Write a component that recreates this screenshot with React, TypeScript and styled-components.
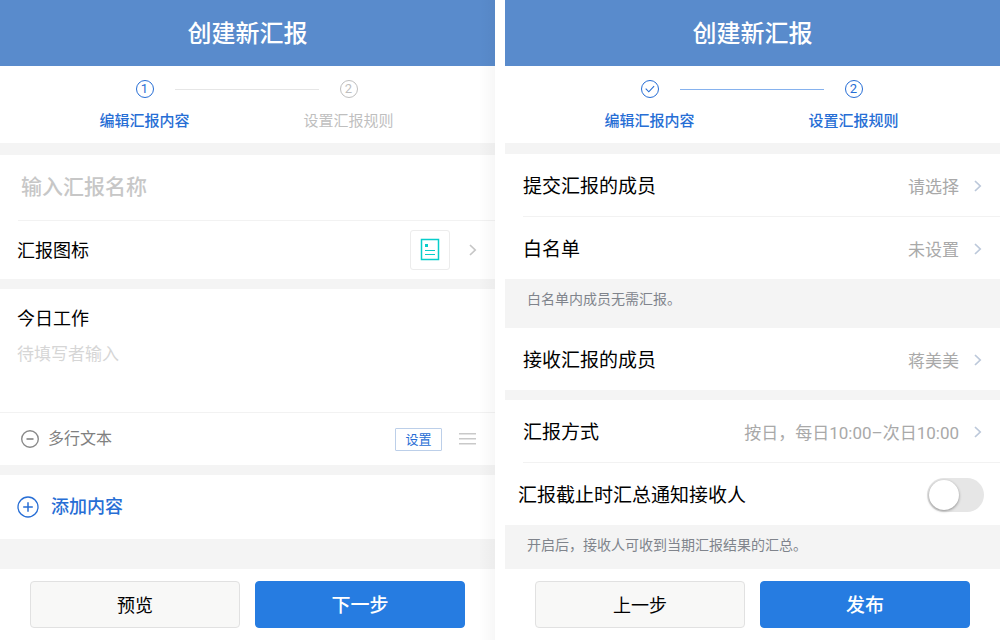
import React from "react";
import styled, { createGlobalStyle } from "styled-components";

const GlobalStyle = createGlobalStyle`
  *, *::before, *::after { box-sizing: border-box; }
  body {
    margin: 0;
    background: #fff;
    color: #000;
    font-family: Roboto, "Noto Sans CJK SC", sans-serif;
  }
  button, input, textarea { font: inherit; color: inherit; margin: 0; }
  h1, h2, p, ol { margin: 0; padding: 0; font-weight: 400; }
`;

const blue = "#276ed5";

const Page = styled.main`
  display: grid;
  grid-template-columns: 1fr 1fr;
  gap: 10px;
  min-height: 100vh;
`;

const Panel = styled.section<{ $edge?: boolean }>`
  position: relative;
  display: flex;
  flex-direction: column;
  min-width: 0;
  background: #fff;

  &::after {
    content: ${(p) => (p.$edge ? '""' : "none")};
    position: absolute;
    inset: 0 0 0 auto;
    width: 16px;
    background: linear-gradient(to right, rgba(0, 0, 0, 0), rgba(0, 0, 0, 0.03));
    pointer-events: none;
  }
`;

const Header = styled.header`
  display: flex;
  align-items: center;
  justify-content: center;
  height: 66px;
  padding-top: 2px;
  background: #598bcc;
`;

const Title = styled.h1`
  color: #fff;
  font-size: 24px;
  line-height: 36px;
  font-weight: 500;
`;

const Steps = styled.ol`
  display: flex;
  justify-content: center;
  height: 77px;
  padding: 14px 2px 0 0;
  list-style: none;
`;

const Step = styled.li<{ $on: boolean }>`
  display: flex;
  flex-direction: column;
  align-items: center;
  gap: 12px;
  width: 90px;
  color: ${(p) => (p.$on ? blue : "#bfbfbf")};
  font-size: 15px;
  line-height: 22px;
  font-weight: ${(p) => (p.$on ? 500 : 400)};
  white-space: nowrap;
`;

const StepMark = styled.span`
  display: flex;
  align-items: center;
  justify-content: center;
  width: 18px;
  height: 18px;
  border: 1px solid currentColor;
  border-radius: 50%;
  font-size: 13px;
  line-height: 16px;
  font-weight: 400;
`;

const StepLine = styled.li<{ $on: boolean }>`
  width: 144px;
  height: 1px;
  margin: 9px -15px 0;
  background: ${(p) => (p.$on ? "#86b2ee" : "#e6e6e6")};
`;

const Band = styled.div<{ $size: number; $grow?: boolean }>`
  flex: ${(p) => (p.$grow ? "1 0 auto" : "none")};
  min-height: ${(p) => p.$size}px;
  background: #f4f4f4;
`;

const Note = styled.p<{ $grow?: boolean }>`
  flex: ${(p) => (p.$grow ? "1 0 auto" : "none")};
  min-height: ${(p) => (p.$grow ? 44 : 49)}px;
  padding: 9px 22px;
  background: #f4f4f4;
  color: #80848c;
  font-size: 14px;
  line-height: 22px;
`;

const Divider = styled.hr<{ $inset?: boolean }>`
  width: auto;
  height: 1px;
  margin: 0 0 0 ${(p) => (p.$inset ? 18 : 0)}px;
  border: 0;
  background: #f2f2f2;
`;

const NameInput = styled.input`
  width: 100%;
  height: 65px;
  padding: 0 21px 2px;
  border: 0;
  outline: 0;
  background: none;
  font-size: 21px;
  font-weight: 500;

  &::placeholder { color: #c7c7c7; opacity: 1; }
`;

const RowButton = styled.button<{ $height: number }>`
  display: flex;
  align-items: center;
  width: 100%;
  height: ${(p) => p.$height}px;
  padding: 0 18px 0 17px;
  border: 0;
  background: none;
  text-align: left;
  cursor: pointer;
`;

const ChoiceButton = styled(RowButton)`
  padding: 2px 18px 0;
`;

const RowLabel = styled.span<{ $large?: boolean }>`
  flex: 1;
  padding-top: 2px;
  font-size: ${(p) => (p.$large ? 19 : 18)}px;
  line-height: 28px;
  white-space: nowrap;
`;

const RowValue = styled.span`
  padding-top: 2px;
  margin-right: 15px;
  color: #a9a9a9;
  font-size: 17px;
  line-height: 26px;
  white-space: nowrap;
`;

const IconTile = styled.span`
  display: flex;
  align-items: center;
  justify-content: center;
  width: 40px;
  height: 40px;
  margin-right: 19px;
  border: 1px solid #ececec;
  border-radius: 3px;
`;

const Field = styled.div`
  display: flex;
  flex-direction: column;
  height: 123px;
  padding: 16px 17px 0;
`;

const FieldLabel = styled.label`
  font-size: 18px;
  line-height: 28px;
`;

const FieldText = styled.textarea`
  height: 64px;
  margin-top: 8px;
  padding: 0;
  border: 0;
  outline: 0;
  resize: none;
  background: none;
  font-size: 17px;
  line-height: 26px;

  &::placeholder { color: #d6d6d6; opacity: 1; }
`;

const Tools = styled.div`
  display: flex;
  align-items: center;
  height: 52px;
  padding: 0 18px 0 20px;
`;

const IconButton = styled.button`
  display: flex;
  padding: 0;
  border: 0;
  background: none;
  cursor: pointer;
`;

const TypeName = styled.span`
  flex: 1;
  margin-left: 8px;
  color: #808080;
  font-size: 16px;
  line-height: 24px;
`;

const SettingButton = styled.button`
  width: 47px;
  height: 23px;
  margin-right: 17px;
  padding: 0;
  border: 1px solid #bccfe9;
  border-radius: 1px;
  background: #fff;
  color: ${blue};
  font-size: 13px;
  line-height: 21px;
  cursor: pointer;
`;

const AddLabel = styled.span`
  margin-left: 12px;
  color: ${blue};
  font-size: 18px;
  line-height: 28px;
  font-weight: 500;
`;

const SwitchRow = styled.label`
  display: flex;
  align-items: center;
  height: 62px;
  padding: 2px 16px 0 13px;
  cursor: pointer;
`;

const Switch = styled.input`
  appearance: none;
  display: flex;
  align-items: center;
  width: 57px;
  height: 34px;
  margin: 0;
  padding: 2px;
  border-radius: 17px;
  background: #e6e6e6;
  cursor: pointer;

  &::before {
    content: "";
    width: 30px;
    height: 30px;
    border-radius: 50%;
    background: #fff;
    box-shadow: 0 1px 3px rgba(0, 0, 0, 0.4);
  }
  &:checked { background: #267ce1; justify-content: flex-end; }
`;

const Footer = styled.footer`
  display: flex;
  gap: 15px;
  padding: 12px 30px;
`;

const Action = styled.button<{ $primary?: boolean }>`
  flex: 1;
  height: 47px;
  padding: 2px 0 0;
  border: 1px solid ${(p) => (p.$primary ? "#267ce1" : "#e1e1e1")};
  border-radius: 4px;
  background: ${(p) => (p.$primary ? "#267ce1" : "#f8f8f7")};
  color: ${(p) => (p.$primary ? "#fff" : "#000")};
  font-size: ${(p) => (p.$primary ? 19 : 18)}px;
  font-weight: ${(p) => (p.$primary ? 500 : 400)};
  line-height: 28px;
  cursor: pointer;
`;

const Chevron = ({ color = "#bcc8da" }: { color?: string }) => (
  <svg width="8" height="12" viewBox="0 0 8 12" fill="none" stroke={color} strokeWidth="1.7" aria-hidden="true">
    <path d="M1 1l5.2 5L1 11" />
  </svg>
);

const CheckIcon = () => (
  <svg width="12" height="12" viewBox="0 0 12 12" fill="none" stroke="currentColor" strokeWidth="1.1" aria-hidden="true">
    <path d="M1.7 5.6l3.1 3.2 5.3-5.6" />
  </svg>
);

const ReportIcon = () => (
  <svg width="20" height="24" viewBox="0 0 20 24" fill="none" stroke="#07cdcb" aria-hidden="true">
    <rect x="1.5" y="1.5" width="17" height="20" strokeWidth="1.5" />
    <rect x="5" y="6" width="3" height="3" fill="#07cdcb" stroke="none" />
    <path d="M5 12.5h10M5 16.5h10" strokeWidth="1.2" />
  </svg>
);

const MinusIcon = () => (
  <svg width="20" height="20" viewBox="0 0 20 20" fill="none" stroke="#8a8a8a" strokeWidth="1.4" aria-hidden="true">
    <circle cx="10" cy="10" r="8.3" />
    <path d="M6.5 10h7" strokeWidth="1.7" />
  </svg>
);

const PlusIcon = () => (
  <svg width="22" height="22" viewBox="0 0 22 22" fill="none" stroke={blue} strokeWidth="1.3" aria-hidden="true">
    <circle cx="11" cy="11" r="10" />
    <path d="M6.2 11h9.6M11 6.2v9.6" strokeWidth="1.5" />
  </svg>
);

const HandleIcon = () => (
  <svg width="18" height="12" viewBox="0 0 18 12" stroke="#c9c9c9" strokeWidth="1.4" aria-hidden="true">
    <path d="M0 .8h17M0 5.8h17M0 10.8h17" />
  </svg>
);

const Progress = ({ current }: { current: 1 | 2 }) => (
  <Steps>
    <Step $on>
      <StepMark>{current === 2 ? <CheckIcon /> : 1}</StepMark>
      编辑汇报内容
    </Step>
    <StepLine $on={current === 2} aria-hidden="true" />
    <Step $on={current === 2}>
      <StepMark>2</StepMark>
      设置汇报规则
    </Step>
  </Steps>
);

const ChoiceRow = ({ label, value }: { label: string; value: string }) => (
  <ChoiceButton type="button" $height={62}>
    <RowLabel $large>{label}</RowLabel>
    <RowValue>{value}</RowValue>
    <Chevron />
  </ChoiceButton>
);

const ContentPanel = () => (
  <Panel $edge>
    <Header>
      <Title>创建新汇报</Title>
    </Header>
    <Progress current={1} />
    <Band $size={12} />
    <NameInput type="text" aria-label="汇报名称" placeholder="输入汇报名称" />
    <Divider $inset />
    <RowButton type="button" $height={58}>
      <RowLabel>汇报图标</RowLabel>
      <IconTile>
        <ReportIcon />
      </IconTile>
      <Chevron color="#c6c6c6" />
    </RowButton>
    <Band $size={10} />
    <Field>
      <FieldLabel htmlFor="today">今日工作</FieldLabel>
      <FieldText id="today" placeholder="待填写者输入" />
    </Field>
    <Divider />
    <Tools>
      <IconButton type="button" aria-label="删除">
        <MinusIcon />
      </IconButton>
      <TypeName>多行文本</TypeName>
      <SettingButton type="button">设置</SettingButton>
      <IconButton type="button" aria-label="排序">
        <HandleIcon />
      </IconButton>
    </Tools>
    <Band $size={10} />
    <RowButton type="button" $height={64}>
      <PlusIcon />
      <AddLabel>添加内容</AddLabel>
    </RowButton>
    <Band $size={30} $grow />
    <Footer>
      <Action type="button">预览</Action>
      <Action type="button" $primary>下一步</Action>
    </Footer>
  </Panel>
);

const RulesPanel = () => (
  <Panel>
    <Header>
      <Title as="h2">创建新汇报</Title>
    </Header>
    <Progress current={2} />
    <Band $size={11} />
    <ChoiceRow label="提交汇报的成员" value="请选择" />
    <Divider $inset />
    <ChoiceRow label="白名单" value="未设置" />
    <Note>白名单内成员无需汇报。</Note>
    <ChoiceRow label="接收汇报的成员" value="蒋美美" />
    <Band $size={10} />
    <ChoiceRow label="汇报方式" value="按日，每日10:00–次日10:00" />
    <Divider $inset />
    <SwitchRow>
      <RowLabel $large>汇报截止时汇总通知接收人</RowLabel>
      <Switch type="checkbox" role="switch" />
    </SwitchRow>
    <Note $grow>开启后，接收人可收到当期汇报结果的汇总。</Note>
    <Footer>
      <Action type="button">上一步</Action>
      <Action type="button" $primary>发布</Action>
    </Footer>
  </Panel>
);

export default function App() {
  return (
    <>
      <GlobalStyle />
      <Page>
        <ContentPanel />
        <RulesPanel />
      </Page>
    </>
  );
}
